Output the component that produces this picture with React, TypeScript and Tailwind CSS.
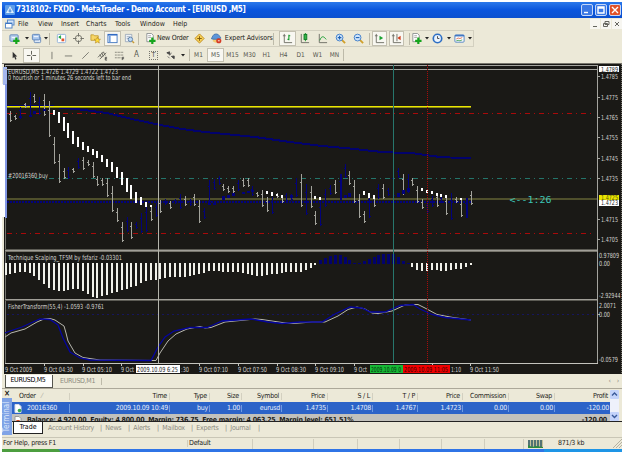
import React from 'react'
import clsx from 'clsx'

const BAR_STEP = 4.845
const barX = (i: number) => 5.4 + i * BAR_STEP

// [high, low, rising] for every five minute bar, starting with the second slot
const bars: [number, number, number?][] = [
	[111, 122], [115, 120], [107, 119, 1], [103, 108], [92, 117, 1], [94, 103], [97, 115, 1],
	[94, 116], [101, 137], [137, 164], [154, 183], [168, 179], [167, 179, 1], [168, 173],
	[158, 169, 1], [157, 170], [160, 166], [162, 178], [176, 186], [178, 186], [178, 197],
	[186, 212], [208, 222], [222, 242], [217, 232, 1], [222, 239], [222, 229, 1], [213, 233, 1],
	[205, 232, 1], [207, 221], [203, 217, 1], [200, 213], [199, 205, 1], [201, 209], [199, 204, 1],
	[194, 209, 1], [196, 206], [199, 206, 1], [194, 206], [200, 223], [208, 219, 1], [180, 203, 1],
	[179, 190, 1], [176, 185, 1], [184, 191], [186, 193], [186, 193], [180, 191, 1], [178, 187],
	[178, 187], [186, 196, 1], [192, 197], [190, 207], [197, 212], [197, 214, 1], [193, 198],
	[195, 203], [193, 202, 1], [194, 201, 1], [178, 197, 1], [174, 207], [184, 215, 1], [186, 208],
	[211, 225], [200, 226, 1], [189, 207, 1], [185, 195, 1], [180, 194], [174, 200, 2], [164, 178, 1],
	[171, 185], [180, 203], [194, 218], [211, 223], [193, 218, 1], [195, 207], [184, 199, 1],
	[184, 199], [188, 196, 1], [172, 197, 1], [168, 178, 1], [174, 195], [174, 193, 1], [178, 186],
	[186, 203], [199, 209], [202, 213, 1], [196, 207, 1], [194, 207], [196, 203, 1], [196, 215],
	[193, 220, 1], [197, 203], [199, 217], [198, 218, 2], [191, 205],
]

// [slot, top, bottom]
const downBlocks: [number, number, number][] = [
	[10, 110, 115], [11, 112, 123], [12, 117, 131], [13, 123, 138], [14, 131, 144], [15, 137, 147],
	[16, 142, 150], [17, 146, 152], [18, 149, 155], [19, 151, 158], [20, 155, 162], [21, 159, 167],
	[22, 162, 172], [23, 167, 178], [24, 172, 185], [25, 178, 192], [26, 185, 199], [27, 192, 203],
	[28, 197, 205], [29, 202, 207], [30, 205, 207], [54, 191, 194], [55, 192, 196], [56, 194, 196],
	[57, 195, 198], [64, 196, 199], [65, 197, 200], [74, 191, 195], [75, 193, 198], [76, 195, 199],
	[86, 188, 191], [87, 190, 193], [88, 191, 194], [89, 193, 196], [90, 194, 197], [91, 195, 198],
	[94, 198, 200],
]

const upBlocks: [number, number, number][] = [
	[3, 116, 118], [5, 115, 117], [6, 111, 114], [8, 109, 111], [42, 203, 205], [43, 203, 205], [45, 196, 200],
	[46, 195, 198], [47, 193, 196], [49, 192, 194], [50, 191, 193], [51, 190, 192], [59, 195, 198],
	[70, 195, 198], [71, 193, 197], [81, 193, 197], [82, 190, 194], [83, 188, 192],
]

const histogram = [
	275, 274, 273, 272, 272, 273, 276, 280, 284, 288, 290, 291, 291, 290, 289, 289, 291, 294, 297, 298, 296,
	295, 293, 292, 290, 289, 287, 286, 283, 281, 280, 280, 279, 278, 277, 277, 277, 277, 276, 275, 274, 273,
	271, 271, 271, 272, 272, 272, 272, 273, 274, 275, 276, 276, 275, 274, 274, 273, 272, 272, 272, 272, 270,
	268, 265, 260, 258, 256, 255, 255, 257, 260, 263, 263, 261, 259, 257, 255, 254, 254, 254, 257, 261, 263,
	267, 270, 271, 271, 270, 270, 271, 271, 270, 269, 269, 267, 265,
]

const signalLine =
	'5,337 11,333 25,329 37,322 44,319 50,318.5 55,320 64,326 66,333 68,341 75,353 83,357.5 100,360 156,360.5 160,353 168,341 176,334 187,329 200,326.5 205,328 211,327.5 225,322 255,319 262,319.5 282,322.5 293,323.5 312,322 325,322 338,316 348,309.5 357,307 365,309 372,313 378,313.5 392,311 405,305 418,304.5 425,308 437,314.5 453,317.5 471,320'
const fisherLine =
	'5,333 10,331 22,327 33,322 40,319 50,319.5 58,325 63,338 70,352 80,358 90,360 151,360.5 158,347 165,337 174,331 190,327.5 207,327.5 213,325 222,321 251,319 268,322 282,323.5 300,322 322,322 335,314 350,307 362,308 370,312 385,312 400,305.5 413,304.5 420,309 432,314.5 445,317.5 471,320'

type LabelProps = {
	x: number
	y: number
	w: number
	fill?: string
	children: string
}

const Label: React.FC<LabelProps> = ({ x, y, w, fill = '#d4d4d0', children }) => (
	<text x={x} y={y} textLength={w} lengthAdjust="spacingAndGlyphs" fill={fill}>
		{children}
	</text>
)

const Chart: React.FC = () => (
	<svg
		viewBox="2 63 620 311"
		className="block w-[620px] h-[311px] shrink-0"
		fontFamily="'DejaVu Sans Condensed', 'DejaVu Sans', sans-serif"
		fontSize="7"
		shapeRendering="crispEdges"
	>
		<rect x="2" y="63" width="620" height="311" fill="#1a1916" />
		<path d="M2 63.5H622" stroke="#77756c" />
		<rect x="2" y="64" width="2" height="310" fill="#ece9d8" />
		<rect x="2" y="84" width="3" height="133" fill="#fff" />
		<rect x="3" y="67" width="4" height="18" fill="#a3b6ee" />
		<rect x="5" y="84" width="2" height="134" fill="#8297e3" />
		<path d="M5.5 65V67M5.5 218V363" stroke="#74746e" />
		<path d="M621.5 64V374" stroke="#77756c" strokeDasharray="1 1" />
		<path d="M5 65.5H597M5 69.5H597" stroke="#a4a49e" />

		{/* levels */}
		<g fill="none">
			<path d="M7 113.5H592M7 233.5H592" stroke="#a80a0a" strokeDasharray="5 4 1 4" />
			<path d="M7 178.5H592" stroke="#23746a" strokeDasharray="5 4 1 4" />
			<path d="M7 202H471" stroke="#02027c" strokeWidth="2" strokeDasharray="2 1" shapeRendering="auto" />
			<path d="M7 199H598" stroke="#50502c" strokeWidth="2" />
			<path d="M7 105.5H54" stroke="#00006c" />
			<polyline
				points="54,107 80,109.5 107,113 132,119 158,124.5 182,129 205,132 255,137 290,142 322,146 350,148.5 382,152 415,153.5 440,157 471,158.5"
				stroke="#02026c"
				strokeWidth="2"
			/>
			<path d="M7 106.5H471" stroke="#ebe600" />
			<path d="M7 107.5H471" stroke="#8e8c13" />
		</g>

		{/* price bars */}
		{bars.map(([high, low, up], i) => {
			const x = Math.round(barX(i + 1))
			return (
				<g key={i} fill={up ? '#02027a' : '#a3a39c'}>
					<rect x={x} y={high} width={up === 2 ? 2 : 1} height={low - high} />
					<rect x={x - 1} y={high + Math.round((low - high) * 0.25)} width="1" height="1" />
					<rect x={x + 1} y={low - 2} width="1" height="1" />
				</g>
			)
		})}
		{upBlocks.map(([i, top, bottom]) => (
			<rect key={i} x={Math.round(barX(i)) - 1} y={top} width="3" height={bottom - top} fill="#02027a" />
		))}
		{downBlocks.map(([i, top, bottom]) => (
			<rect key={i} x={Math.round(barX(i)) - 1} y={top} width="2" height={bottom - top} fill="#fff" />
		))}

		{/* pane borders */}
		<path d="M5 249.5H597M5 300.5H597" stroke="#5c5b54" />
		<path d="M5 250.5H597M5 299.5H597" stroke="#a19f98" />
		<path d="M5 251.5H597" stroke="#77756c" />
		<path d="M5 363.5H598" stroke="#c4c4be" />
		<path d="M597.5 65V363" stroke="#a4a49e" />
		<path
			d="M44.5 363v3M83.5 363v3M121.5 363v3M199.5 363v3M238.5 363v3M277.5 363v3M315.5 363v3M354.5 363v3M432.5 363v3M470.5 363v3"
			stroke="#c4c4be"
		/>
		<path
			d="M598 76.5h2M598 97.5h2M598 117.5h2M598 137.5h2M598 158.5h2M598 178.5h2M598 219.5h2M598 239.5h2M598 314.5h2"
			stroke="#a4a49e"
		/>

		{/* scalping histogram, zero line at 264 */}
		{histogram.map((y, i) => {
			const x = Math.round(barX(i))
			return y < 264 ? (
				<rect key={i} x={x - 1} y={y} width="3" height={264 - y} fill="#02026c" />
			) : (
				<rect key={i} x={x - (i ? 1 : 0)} y="263" width="2" height={y - 263} fill="#f1f1ea" />
			)
		})}

		<path d="M7 314.5H597" stroke="#16165e" strokeDasharray="2 3" />
		<g fill="none" strokeWidth="1" shapeRendering="auto">
			<polyline points={signalLine} stroke="#b6b6ae" />
			<polyline points={fisherLine} stroke="#0505a0" strokeWidth="1.3" />
		</g>

		{/* time markers */}
		<path d="M158.5 65V363" stroke="#b5b5ac" />
		<path d="M393.5 65V363" stroke="#27766c" />
		<path d="M427.5 65V363" stroke="#a50b0b" strokeDasharray="1 1" />

		<g shapeRendering="auto">
			<Label x={8} y={73.5} w={110}>EURUSD,M5  1.4726 1.4729 1.4722 1.4723</Label>
			<Label x={8} y={79.5} w={123}>0 hourtish or 1 minutes 26 seconds left to bar end</Label>
			<Label x={8} y={177.5} w={40}>#20016360 buy</Label>
			<Label x={8} y={260} w={114}>Technique Scalping_TF5M by fsfariz -0.03301</Label>
			<Label x={8} y={309} w={96}>FisherTransform(55,4) -1.0593 -0.9761</Label>
			<text
				x="509.5"
				y="203"
				textLength="42"
				lengthAdjust="spacingAndGlyphs"
				fontSize="9.5"
				fontFamily="'DejaVu Sans Mono', monospace"
				fill="#3cc4b6"
			>
				{'<--1:26'}
			</text>
		</g>

		{/* price scale */}
		<rect x="599" y="66" width="20" height="6" fill="#fff" />
		<rect x="599" y="195" width="20" height="5" fill="#ebe600" />
		<rect x="599" y="200" width="20" height="6" fill="#fff" />
		<Label x={601} y={71.5} w={17} fill="#222">1.4789</Label>
		<Label x={601} y={79} w={17}>1.4785</Label>
		<Label x={601} y={99.5} w={17}>1.4775</Label>
		<Label x={601} y={119.7} w={17}>1.4765</Label>
		<Label x={601} y={140} w={17}>1.4755</Label>
		<Label x={601} y={160.5} w={17}>1.4745</Label>
		<Label x={601} y={180.5} w={17}>1.4735</Label>
		<Label x={601} y={199.5} w={17} fill="#55550c">1.4725</Label>
		<Label x={601} y={205} w={17} fill="#222">1.4723</Label>
		<Label x={601} y={221.5} w={17}>1.4715</Label>
		<Label x={601} y={241.7} w={17}>1.4705</Label>
		<Label x={599} y={258} w={20}>0.97809</Label>
		<Label x={599} y={266} w={11}>0.00</Label>
		<Label x={599} y={298} w={21.5}>-2.92944</Label>
		<Label x={599} y={307.5} w={17}>2.0071</Label>
		<Label x={599} y={316.5} w={11}>0.00</Label>
		<Label x={599} y={361.5} w={19}>-0.0579</Label>

		{/* time scale */}
		<Label x={5} y={371.5} w={27}>9 Oct 2009</Label>
		<Label x={44} y={371.5} w={29}>9 Oct 04:30</Label>
		<Label x={82} y={371.5} w={30}>9 Oct 05:10</Label>
		<Label x={121} y={371.5} w={13}>9 Oct</Label>
		<Label x={181} y={371.5} w={8}>:30</Label>
		<Label x={199} y={371.5} w={29}>9 Oct 07:10</Label>
		<Label x={238} y={371.5} w={29}>9 Oct 07:50</Label>
		<Label x={276} y={371.5} w={30}>9 Oct 08:30</Label>
		<Label x={315} y={371.5} w={29}>9 Oct 09:10</Label>
		<Label x={354} y={371.5} w={13}>9 Oct</Label>
		<Label x={451} y={371.5} w={10}>1:10</Label>
		<Label x={470} y={371.5} w={29}>9 Oct 11:50</Label>
		<rect x="136" y="365" width="44" height="8" fill="#fff" />
		<Label x={137} y={371.5} w={41} fill="#222">2009.10.09 6:25</Label>
		<rect x="370" y="365" width="33" height="8" fill="#17b936" />
		<Label x={371} y={371.5} w={30} fill="#06300d">2009.10.09 0</Label>
		<rect x="403" y="365" width="47" height="8" fill="#f00000" />
		<Label x={404} y={371.5} w={44} fill="#3a0000">2009.10.09 11:05</Label>
	</svg>
)

const art: Record<string, React.ReactNode> = {
	newChart: (
		<>
			<rect x="1" y="2" width="9" height="7" rx="1" fill="#b9d0ee" stroke="#5d83b8" />
			<path d="M3 5h5" stroke="#fff" />
			<path d="M8 5v7M4.5 8.5h7" stroke="#15a51d" strokeWidth="2.4" />
		</>
	),
	profiles: (
		<>
			<rect x="3.5" y="4.5" width="7" height="6" rx="1" fill="#dde9f8" stroke="#6688b7" />
			<rect x="1.5" y="1.5" width="8" height="6" rx="1" fill="#a7c5ee" stroke="#5d83b8" />
			<path d="M3 4h5" stroke="#fff" />
		</>
	),
	market: (
		<>
			<rect x="1.5" y="1.5" width="9" height="9" rx="1" fill="#fff" stroke="#8fb0d6" />
			<path d="M3 4.5l2-1.5v3z" fill="#1ba53e" stroke="#1ba53e" />
			<path d="M6 6h3v3h-3z" fill="#e2552c" />
		</>
	),
	target: <path d="M6 0v4M6 8v4M0 6h4M8 6h4M6 2.500a3.500 3.500 0 100 7 3.500 3.500 0 000-7z" fill="none" stroke="#66665e" strokeWidth=".9" />,
	navigator: (
		<>
			<path d="M1 2h3l1 1h4v5H1z" fill="#f7d667" stroke="#b99122" strokeWidth=".8" />
			<path d="M8 4.5l1 2.2 2.4.2-1.8 1.6.6 2.5L8 9.7 5.8 11l.6-2.5L4.6 6.900 7 6.700z" fill="#ffdd38" stroke="#b1811b" strokeWidth=".6" />
		</>
	),
	terminal: (
		<>
			<rect x="1" y="1.5" width="10" height="9" fill="#fff" stroke="#4478c0" />
			<path d="M1 2h10" stroke="#2a65c2" strokeWidth="1.5" />
			<path d="M3 3v7" stroke="#77a2dd" strokeWidth="2" />
		</>
	),
	tester: (
		<>
			<path d="M1.5 1.5h7v8h-7zM3 4h4M3 6h4" fill="#eef2f7" stroke="#8e9daf" strokeWidth=".8" />
			<circle cx="7" cy="7" r="2.4" fill="#bcd9f4" stroke="#5e80a8" />
			<path d="M9 9l2 2" stroke="#c59934" strokeWidth="1.5" />
		</>
	),
	order: (
		<>
			<path d="M2 .5h5l2 2v7H2z" fill="#fff" stroke="#8b8f8f" />
			<path d="M3.5 3h3M3.5 5h3" stroke="#888" strokeWidth=".8" />
			<path d="M8 5v7M4.5 8.5h7" stroke="#15a51d" strokeWidth="2.4" />
		</>
	),
	editor: (
		<>
			<path d="M6 1l5 5-5 5-5-5z" fill="#f8d157" stroke="#c08a19" />
			<path d="M6 3.5v5M3.5 6h5" stroke="#7d5a0f" />
		</>
	),
	advisor: (
		<>
			<path d="M2 6h7v3c-2 2-5 2-7 0z" fill="#f3cb72" />
			<path d="M0 6c2 1.500 9 1 11-.5C9.500 5 9.500 1 5.500 1S2 5 0 6z" fill="#5d95d9" stroke="#3568a6" strokeWidth=".8" />
			<circle cx="8.5" cy="8.5" r="2.8" fill="#d63a24" />
			<path d="M7.5 8.5h2" stroke="#fff" />
		</>
	),
	barChart: (
		<>
			<path d="M2.5 1v9.5H11M1 3h3" fill="none" stroke="#6c6c64" />
			<path d="M7.5 2v6M6 7h1.5M7.5 3H9" stroke="#129a2c" strokeWidth="1.2" />
		</>
	),
	candles: (
		<>
			<path d="M2.5 1v9.5H11" fill="none" stroke="#6c6c64" />
			<path d="M7 0v9" stroke="#129a2c" />
			<rect x="5.5" y="1.5" width="3" height="5.5" fill="#35b34a" stroke="#0e7d22" />
		</>
	),
	lineChart: (
		<>
			<path d="M2.5 1v9.5H11" fill="none" stroke="#6c6c64" />
			<path d="M3 8c2-5 4-5 7-1" fill="none" stroke="#129a2c" />
		</>
	),
	zoomIn: (
		<>
			<path d="M7.5 7.5l3.5 3.5" stroke="#d0a02b" strokeWidth="2" />
			<circle cx="5" cy="5" r="3.7" fill="#cfe4fa" stroke="#3c7cc8" />
			<path d="M5 3v4M3 5h4" stroke="#1d61b4" strokeWidth="1.2" />
		</>
	),
	zoomOut: (
		<>
			<path d="M7.5 7.5l3.5 3.5" stroke="#d0a02b" strokeWidth="2" />
			<circle cx="5" cy="5" r="3.7" fill="#cfe4fa" stroke="#3c7cc8" />
			<path d="M3 5h4" stroke="#1d61b4" strokeWidth="1.2" />
		</>
	),
	autoScroll: (
		<>
			<path d="M2.5 1v9.5H11M1 3h3" fill="none" stroke="#6c6c64" />
			<path d="M6 3l4 2.5L6 8z" fill="#18a330" />
		</>
	),
	chartShift: (
		<>
			<path d="M2.5 1v9.5H11M1 3h3M6.5 1v8" fill="none" stroke="#6c6c64" />
			<path d="M10.5 3v5L7 5.5z" fill="#d03c1c" />
		</>
	),
	clock: (
		<>
			<circle cx="6" cy="6" r="4.6" fill="#eaf3fd" stroke="#2e6fc4" strokeWidth="1.8" />
			<path d="M6 3.5V6h2" fill="none" stroke="#444" />
		</>
	),
	template: (
		<>
			<rect x="1" y="2" width="10" height="8" rx="1" fill="#fff" stroke="#4d80c2" />
			<path d="M1 3h10" stroke="#3972c0" strokeWidth="1.5" />
			<path d="M2.5 6.5l2-1 2 .5 2.5-1" fill="none" stroke="#cf4a28" strokeWidth=".8" />
			<path d="M2.5 8.5l2-.5 2 .5 2.5-1" fill="none" stroke="#24903a" strokeWidth=".8" />
		</>
	),
	cursor: <path d="M4 2v7l1.700-1.500L7 10.500l1.200-.6-1.200-2.700h2z" fill="#333" />,
	cross: <path d="M6 1v4M6 7v4M1 6h4M7 6h4" stroke="#55554e" />,
	vline: <path d="M6.5 2v8" stroke="#77776f" />,
	hline: <path d="M2 6.5h8" stroke="#77776f" />,
	trend: <path d="M2.5 9.5l7-7" stroke="#77776f" />,
	channel: (
		<>
			<path d="M1 8l6-6M3 10l7-7M3 5l2 3M5 3l2 4M7 2l2 4" stroke="#55554e" strokeWidth=".9" />
			<path d="M11 8H9v3h2M9 9.500h2" fill="none" stroke="#333" strokeWidth=".8" />
		</>
	),
	fibo: (
		<>
			<path d="M1 2.5h9M1 5.5h9M1 8.5h7" stroke="#6c6c64" strokeDasharray="1 .6" />
			<path d="M11 8H9v3M9 9.500h2" fill="none" stroke="#333" strokeWidth=".8" />
		</>
	),
	arrows: (
		<>
			<path d="M2 3l3-1v3zM7 7l3-.5v3z" fill="#444" stroke="#444" />
			<path d="M3 7l2 2M7 3l-2 3" stroke="#666" />
		</>
	),
}

type IconProps = { name: string; pressed?: boolean; className?: string }

const Icon: React.FC<IconProps> = ({ name, pressed, className }) => (
	<span
		className={clsx(
			'flex h-[15px] shrink-0 items-center justify-center',
			pressed && 'border border-[#c3c0b0] bg-[#f8f7f1]',
			className || 'w-[17px]'
		)}
	>
		<svg viewBox="0 0 12 12" className="size-[11px] shrink-0">
			{art[name]}
		</svg>
	</span>
)

const Drop: React.FC = () => (
	<span className="flex w-[7px] shrink-0 justify-center">
		<svg viewBox="0 0 4 3" className="h-[3px] w-1">
			<path d="M0 0h4L2 2.5z" fill="#222" />
		</svg>
	</span>
)

const Grip: React.FC<{ className?: string }> = ({ className }) => (
	<span className={clsx('h-3 w-px shrink-0 bg-[#bdbaa9]', className)} />
)

const menu = [
	['File', 'w-[20px]'],
	['View', 'w-[23px]'],
	['Insert', 'w-[25px]'],
	['Charts', 'w-[29px]'],
	['Tools', 'w-[25px]'],
	['Window', 'w-[33px]'],
	['Help', 'w-[20px]'],
]

const TitleBar: React.FC = () => (
	<div className="flex h-4 shrink-0 items-center bg-linear-to-b from-[#2b78ea] via-[#0a55dd] to-[#0b50cf] pl-[3px] pr-px">
		<svg viewBox="0 0 10 10" className="mr-px size-[10px]">
			<rect width="10" height="10" rx="1" fill="#5e9eea" />
			<path d="M5 1l4 7H1z" fill="#dff0ff" />
			<path d="M5 3.5v4M3.5 6h3" stroke="#3a7fd0" />
		</svg>
		<span className="text-[8px] font-bold tracking-[-0.35px] text-white">
			7318102: FXDD - MetaTrader - Demo Account - [EURUSD ,M5]
		</span>
		<div className="ml-auto flex gap-[2px]">
			{['M3 8.5h4', 'M3 3h6v6H3zM3 4h6', 'M3 3l6 6M9 3l-6 6'].map((d, i) => (
				<svg key={d} viewBox="0 0 12 12" className="size-3">
					<rect x=".5" y=".5" width="11" height="11" rx="1.5" fill={i === 2 ? '#e0522a' : '#3b78e4'} stroke="#c5d7f8" />
					<path d={d} fill="none" stroke="#fff" strokeWidth="1.4" />
				</svg>
			))}
		</div>
	</div>
)

const MenuBar: React.FC = () => (
	<div className="flex h-3 shrink-0 items-center pl-[3px] text-[7px]">
		<svg viewBox="0 0 10 10" className="mr-[3px] size-[10px]">
			<rect x="2.5" y="1" width="6.5" height="5" fill="#d6e6fa" stroke="#5688c8" />
			<rect x=".5" y="4" width="6.5" height="5" fill="#fff" stroke="#5688c8" />
			<path d="M1 4.5h6" stroke="#3d77c5" />
		</svg>
		{menu.map(([name, width]) => (
			<span key={name} className={width}>
				{name}
			</span>
		))}
		<div className="ml-auto flex gap-px">
			{['M3 7.5h4', 'M4 2.5h4v3H4zM2.5 4.5h4v3h-4z', 'M3 3l4 4M7 3l-4 4'].map((d) => (
				<svg key={d} viewBox="0 0 10 10" className="size-[10px]">
					<rect width="10" height="10" fill="#f7f6f1" />
					<path d={d} fill="none" stroke="#65655f" />
				</svg>
			))}
		</div>
	</div>
)

const MainToolbar: React.FC = () => (
	<div className="flex h-[17px] w-[472px] shrink-0 items-center border-y border-r border-[#d3d0c0] pl-1 text-[7px]">
		<Icon name="newChart" />
		<Drop />
		<Icon name="profiles" className="w-[12px]" />
		<Drop />
		<Grip className="mr-[3px]" />
		<Icon name="market" />
		<Icon name="target" />
		<Icon name="navigator" />
		<Icon name="terminal" pressed />
		<Icon name="tester" />
		<Grip className="mr-[4px]" />
		<Icon name="order" className="w-[14px]" />
		<span className="w-[35px] whitespace-nowrap tracking-[-0.25px]">New Order</span>
		<Icon name="editor" />
		<Icon name="advisor" />
		<span className="w-[50px] whitespace-nowrap tracking-[-0.1px]">Expert Advisors</span>
		<Grip className="mr-[5px]" />
		<Icon name="barChart" pressed />
		<Icon name="candles" />
		<Icon name="lineChart" className="w-[18px]" />
		<Icon name="zoomIn" className="w-[19px]" />
		<Icon name="zoomOut" />
		<Grip className="mx-[2px]" />
		<Icon name="autoScroll" pressed className="w-[15px]" />
		<Icon name="chartShift" pressed className="ml-[2px] w-[15px]" />
		<Grip className="ml-[5px]" />
		<Icon name="order" className="w-[13px]" />
		<Drop />
		<Icon name="clock" className="w-[15px]" />
		<Drop />
		<Icon name="template" className="w-[14px]" />
		<Drop />
	</div>
)

const ChartToolbar: React.FC = () => (
	<div className="flex h-4 shrink-0 items-center pl-1 text-[6.5px] text-[#55554e]">
		<Icon name="cursor" />
		<Icon name="cross" pressed />
		<Icon name="vline" className="ml-[3px] w-[17px]" />
		<Icon name="hline" />
		<Icon name="trend" />
		<Icon name="channel" />
		<Icon name="fibo" />
		<span className="w-[17px] text-center text-[8px]">A</span>
		<span className="flex w-[17px] justify-center">
			<span className="flex h-[9px] w-[9px] items-center justify-center border border-dotted border-[#77776f] text-[7px]">T</span>
		</span>
		<Icon name="arrows" />
		<Drop />
		<Grip className="ml-[3px]" />
		{['M1', 'M5', 'M15', 'M30', 'H1', 'H4', 'D1', 'W1', 'MN'].map((name) => (
			<span
				key={name}
				className={clsx(
					'flex h-[14px] w-[17px] items-center justify-center',
					name === 'M5' && 'border border-[#c3c0b0] bg-[#f8f7f1]'
				)}
			>
				{name}
			</span>
		))}
		<Grip />
	</div>
)

const rowGrid =
	'grid grid-cols-[58px_100px_40px_32px_40px_46px_45px_45px_45px_46px_46px_55px] items-center text-right'

const Terminal: React.FC = () => (
	<div className="flex h-[48px] shrink-0 border-t border-[#aca899] pt-px text-[7px] tracking-[-0.25px]">
		<div className="flex w-[10px] flex-col">
			<span className="h-[8px] text-center text-[8px] leading-[7px] font-bold">×</span>
			<div className="flex h-[37px] items-center justify-center bg-[#80a3e6] text-[8px] tracking-normal text-[#dfe9fb]">
				<span className="-rotate-90">Terminal</span>
			</div>
		</div>
		<div className="flex w-[610px] flex-col">
			<div className="flex h-[32px] overflow-hidden border-b border-[#222]">
				<div className="w-[598px] shrink-0">
					<div className={clsx(rowGrid, 'h-3 divide-x divide-[#d3d0c0] pt-px [&>*]:pr-[2px]')}>
						<span className="pl-[7px] text-left">
							Order <span className="pl-1 text-[#aaa79a]">⁄</span>
						</span>
						{['Time', 'Type', 'Size', 'Symbol', 'Price', 'S / L', 'T / P', 'Price', 'Commission', 'Swap', 'Profit'].map((name, i) => (
							<span key={i}>{name}</span>
						))}
					</div>
					<div className={clsx(rowGrid, 'h-3 divide-x divide-[#6d9be3] bg-[#2c63c8] text-[#e6eefb] [&>*]:pr-px')}>
						<span className="flex items-center pl-[2px]">
							<svg viewBox="0 0 8 9" className="mr-[5px] h-[9px] w-2">
								<path d="M1 .5h4l2 2v6H1z" fill="#fff" stroke="#d6dce6" />
								<circle cx="5.5" cy="6.5" r="1.8" fill="#3aa64f" />
							</svg>
							20016360
						</span>
						{['2009.10.09 10:49', 'buy', '1.00', 'eurusd', '1.4735', '1.4708', '1.4767', '1.4723', '0.00', '0.00', '-120.00'].map((value, i) => (
							<span key={i}>{value}</span>
						))}
					</div>
					<div className="flex h-[11px] items-center bg-[#c2c1bc] pt-px pl-[2px] pr-[3px] text-[7px] font-bold">
						<svg viewBox="0 0 8 9" className="mr-[5px] h-[9px] w-2">
							<path d="M1 .5h4l2 2v6H1z" fill="#fff" stroke="#999" />
							<path d="M2 4h4L4 7z" fill="#d44a22" />
						</svg>
						<span className="whitespace-pre">Balance: 4 920.00  Equity: 4 800.00  Margin: 736.75  Free margin: 4 063.25  Margin level: 651.51%</span>
						<span className="ml-auto">-120.00</span>
					</div>
				</div>
				<div className="flex h-[31px] w-[9px] shrink-0 flex-col justify-between bg-[#eef1fb]">
					{['M2 5.5L4.5 3 7 5.5', 'M2 3l2.5 2.5L7 3'].map((d) => (
						<svg key={d} viewBox="0 0 9 9" className="size-[9px]">
							<rect width="9" height="9" rx="1" fill="#c3d3fb" />
							<path d={d} fill="none" stroke="#3a5a9a" strokeWidth="1.4" />
						</svg>
					))}
				</div>
			</div>
			<div className="flex h-[12px] items-center text-[#8d8b80]">
				<span className="-mt-px ml-px flex h-[12px] w-[30px] items-center justify-center border-x border-b border-[#222] bg-white pt-px tracking-normal text-black">Trade</span>
				<span className="w-[57px] pl-[5px] whitespace-nowrap">Account History</span>
				<span className="w-[28px]">|&nbsp;&nbsp;News</span>
				<span className="w-[29px]">|&nbsp;&nbsp;Alerts</span>
				<span className="w-[34px]">|&nbsp;&nbsp;Mailbox</span>
				<span className="w-[34px]">|&nbsp;&nbsp;Experts</span>
				<span className="w-[33px]">|&nbsp;&nbsp;Journal</span>
				<span>|</span>
			</div>
		</div>
	</div>
)

const StatusBar: React.FC = () => (
	<div className="mt-px flex h-[12px] shrink-0 items-center border-t border-[#c9c6b6] pl-px text-[7px] tracking-[-0.2px]">
		<span className="w-[184px]">For Help, press F1</span>
		<span className="w-[65px] border-l border-[#d0cdbd] pl-px">Default</span>
		<span className="h-[10px] w-[61px] border-l border-[#d0cdbd]" />
		<span className="h-[10px] w-[44px] border-l border-[#d0cdbd]" />
		<span className="h-[10px] w-[42px] border-l border-[#d0cdbd]" />
		<span className="h-[10px] w-[42px] border-l border-[#d0cdbd]" />
		<span className="h-[10px] w-[43px] border-l border-[#d0cdbd]" />
		<span className="h-[10px] w-[39px] border-l border-[#d0cdbd]" />
		<span className="flex h-[10px] w-[35px] items-center border-l border-[#d0cdbd] pl-[4px]">
			<svg viewBox="0 0 15 8" className="h-2 w-[15px]">
				<rect width="15" height="8" fill="#c5c39a" />
				<path d="M1 0v8M4 0v8M7 0v8M10 0v8M13 0v8" stroke="#2e5a68" strokeWidth="1.5" />
				<path d="M0 5l4 2 4-1 7 1v1H0z" fill="#2f8a3e" />
			</svg>
		</span>
		<span>871/3 kb</span>
		<svg viewBox="0 0 9 9" className="ml-auto size-[9px]">
			<path d="M0 9l9-9M3 9l6-6M6 9l3-3" stroke="#b5b2a2" />
		</svg>
	</div>
)

const App: React.FC = () => (
	<div className="h-[452px] w-[625px] overflow-hidden bg-white pl-[2px] pt-[2px] font-['DejaVu_Sans_Condensed','DejaVu_Sans',sans-serif] leading-none text-[#1c1c18]">
		<div className="flex h-[450px] w-[620px] flex-col bg-[#ece9d8]">
			<TitleBar />
			<MenuBar />
			<MainToolbar />
			<ChartToolbar />
			<Chart />
			<div className="flex h-[14px] shrink-0 items-center pl-[3px] text-[7px] tracking-[-0.3px] text-[#8d8b80]">
				<span className="flex h-[13px] w-[48px] items-center justify-center border-x border-b border-[#55554e] bg-white pr-[2px] text-black">
					EURUSD,M5
				</span>
				<span className="w-[49px] border-r border-[#bdbaa9] pl-[7px]">EURUSD,M1</span>
				<span className="ml-auto flex gap-[6px] pr-[3px]">
					<span>‹</span>
					<span>›</span>
				</span>
			</div>
			<Terminal />
			<StatusBar />
			<div className="flex min-h-0 flex-1 bg-[#2f74e6]">
				<div className="w-[58px] rounded-tr bg-[#4c9e3f]" />
				<div className="ml-auto w-[78px] bg-[#1e95e6]" />
			</div>
		</div>
	</div>
)

export default App
